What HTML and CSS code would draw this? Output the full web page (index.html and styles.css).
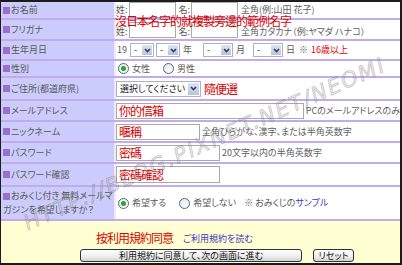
FILE: index.html
```html
<!DOCTYPE html>
<html lang="ja">
<head>
    <meta charset="UTF-8">
    <meta name="viewport" content="width=device-width, initial-scale=1.0">
    <title>会員登録</title>
    <link rel="stylesheet" href="styles.css">
</head>
<body>
    <div class="frame">
        <div class="form">
            <!-- Name -->
            <div class="form-row row-name">
                <div class="label"><span>お名前</span></div>
                <div class="value">
                    <span class="caption">姓:</span><input class="field w-name" type="text">
                    <span class="caption gap-l">名:</span><input class="field w-name" type="text">
                    <span class="hint">全角(例:山田 花子)</span>
                </div>
            </div>

            <div class="form-row row-kana">
                <div class="label"><span>フリガナ</span></div>
                <div class="value bottom">
                    <span class="caption">姓:</span><input class="field w-name" type="text">
                    <span class="caption gap-l">名:</span><input class="field w-name" type="text">
                    <span class="hint">全角カタカナ（例:ヤマダ ハナコ）</span>
                </div>
            </div>

            <!-- Birthday -->
            <div class="form-row row-birth">
                <div class="label"><span>生年月日</span></div>
                <div class="value">
                    <span class="caption year">19</span>
                    <span class="combo w-digit"><span class="combo-text">-</span><span class="combo-btn"><svg width="7" height="5" viewBox="0 0 7 5"><path d="M1 1 L3.5 3.5 L6 1" /></svg></span></span>
                    <span class="combo w-digit next"><span class="combo-text">-</span><span class="combo-btn"><svg width="7" height="5" viewBox="0 0 7 5"><path d="M1 1 L3.5 3.5 L6 1" /></svg></span></span>
                    <span class="caption unit">年</span>
                    <span class="combo w-day month"><span class="combo-text">-</span><span class="combo-btn"><svg width="7" height="5" viewBox="0 0 7 5"><path d="M1 1 L3.5 3.5 L6 1" /></svg></span></span>
                    <span class="caption unit">月</span>
                    <span class="combo w-day day"><span class="combo-text">-</span><span class="combo-btn"><svg width="7" height="5" viewBox="0 0 7 5"><path d="M1 1 L3.5 3.5 L6 1" /></svg></span></span>
                    <span class="caption unit">日</span>
                    <span class="caption unit">※</span>
                    <span class="age">16歳以上</span>
                </div>
            </div>

            <div class="form-row row-sex">
                <div class="label"><span>性別</span></div>
                <div class="value">
                    <span class="radio on"></span><span class="caption opt">女性</span>
                    <span class="radio second"></span><span class="caption opt">男性</span>
                </div>
            </div>

            <div class="form-row row-pref">
                <div class="label"><span>ご住所(都道府県)</span></div>
                <div class="value">
                    <span class="combo w-pref"><span class="combo-text">選択してください</span><span class="combo-btn"><svg width="7" height="5" viewBox="0 0 7 5"><path d="M1 1 L3.5 3.5 L6 1" /></svg></span></span>
                    <span class="note inline">隨便選</span>
                </div>
            </div>

            <div class="form-row row-mail">
                <div class="label"><span>メールアドレス</span></div>
                <div class="value">
                    <input class="field w-mail red-value" type="text" value="你的信箱">
                    <span class="hint">PCのメールアドレスのみ</span>
                </div>
            </div>

            <div class="form-row row-nick">
                <div class="label"><span>ニックネーム</span></div>
                <div class="value">
                    <input class="field w-nick red-value" type="text" value="暱稱">
                    <span class="hint">全角ひらがな、漢字、または半角英数字</span>
                </div>
            </div>

            <div class="form-row row-pass">
                <div class="label"><span>パスワード</span></div>
                <div class="value">
                    <input class="field w-pass red-value" type="text" value="密碼">
                    <span class="hint">20文字以内の半角英数字</span>
                </div>
            </div>

            <div class="form-row row-pass2">
                <div class="label"><span>パスワード確認</span></div>
                <div class="value">
                    <input class="field w-pass tall red-value" type="text" value="密碼確認">
                </div>
            </div>

            <div class="form-row row-omikuji">
                <div class="label"><span>おみくじ付き 無料メールマ<br>ガジンを希望しますか？</span></div>
                <div class="value">
                    <span class="radio on"></span><span class="caption opt">希望する</span>
                    <span class="radio second wide"></span><span class="caption opt">希望しない</span>
                    <span class="caption sample">※ おみくじの<a href="#">サンプル</a></span>
                </div>
            </div>

            <!-- Annotation over the two name rows -->
            <span class="note name-note">沒日本名字的就複製旁邊的範例名字</span>
        </div>

        <div class="footer">
            <div class="agree-line">
                <span class="note">按利用規約同意</span>
                <a class="rules-link" href="#">ご利用規約を読む</a>
            </div>
            <div class="btn-line">
                <button class="btn btn-next" type="button">利用規約に同意して、次の画面に進む</button>
                <button class="btn btn-reset" type="button">リセット</button>
            </div>
        </div>

        <span class="watermark">HTTP://BLOG.PIXNET.NET/NEOMI</span>
    </div>
</body>
</html>
```

FILE: styles.css
```css
* {
    box-sizing: border-box;
}

body {
    margin: 0;
    background: #ffffff;
    font-family: "Noto Sans CJK JP", "Noto Sans", sans-serif;
    font-feature-settings: "palt";
    color: #5a5a5a;
}

/* Outer dark frame of the capture */
.frame {
    position: relative;
    width: 402px;
    height: 265px;
    border: 2px solid #1c1c1c;
    border-left-width: 1px;
    overflow: hidden;
}

.form {
    position: relative;
}

/* One line of the form: label column + value column */
.form-row {
    display: grid;
    grid-template-columns: 113px 1fr;
    border-bottom: 2px solid #c1abea;
}

.row-name { height: 18px; }
.row-kana { height: 21px; }
.row-birth { height: 20px; }
.row-sex { height: 17px; }
.row-pref { height: 23px; }
.row-mail { height: 21px; }
.row-nick { height: 21px; }
.row-pass { height: 21px; }
.row-pass2 { height: 23px; }
.row-omikuji { height: 34px; }

.label {
    display: flex;
    align-items: center;
    padding-left: 2px;
    background: #ccccfc;
    font-size: 9px;
    line-height: 14px;
    color: #585858;
    white-space: nowrap;
}

.label span::before {
    content: "";
    display: inline-block;
    width: 7px;
    height: 7px;
    margin-right: 1px;
    background: #9a6fd2;
    vertical-align: -0.5px;
}

.value {
    display: flex;
    align-items: center;
    padding-left: 0;
    border-left: 2px solid #efecf8;
    background: #ffffff;
    font-size: 9px;
    line-height: 12px;
    white-space: nowrap;
    overflow: hidden;
}

.value.bottom {
    align-items: flex-end;
    padding-bottom: 1px;
}

.caption {
    color: #5a5a5a;
    margin-right: 1px;
}

.gap-l {
    margin-left: 3px;
}

.hint {
    margin-left: 3px;
    color: #606060;
}

/* Text inputs */
.field {
    height: 16px;
    margin: 0;
    padding: 0 2px;
    border: 1px solid #a9a9a9;
    background: #ffffff;
    font-family: "Noto Sans CJK JP", sans-serif;
    font-size: 9px;
    outline: none;
}

.field.tall {
    height: 17px;
}

.w-name { width: 47px; }
.w-mail { width: 192px; }
.w-nick { width: 84px; }
.w-pass { width: 104px; }

.w-mail + .hint,
.w-nick + .hint,
.w-pass + .hint {
    margin-left: 2px;
}

.red-value {
    color: #d60000;
    font-family: "Noto Sans CJK TC", sans-serif;
    font-size: 12px;
    letter-spacing: -1px;
}

/* XP style drop-down */
.combo {
    display: inline-flex;
    height: 14px;
    border: 1px solid #a7b3c8;
    background: #ffffff;
}

.combo-text {
    flex: 1;
    padding-left: 3px;
    font-size: 9px;
    line-height: 12px;
    color: #222222;
}

.combo-btn {
    display: flex;
    align-items: center;
    justify-content: center;
    width: 12px;
    border: 1px solid #ffffff;
    background: linear-gradient(#dde4f2, #b9c3da);
}

.combo-btn svg path {
    fill: none;
    stroke: #2f3f66;
    stroke-width: 1.7;
}

.w-digit { width: 24px; }
.w-day { width: 30px; }

.w-pref {
    width: 85px;
    height: 16px;
}

.w-pref .combo-text {
    line-height: 14px;
}

.w-pref .combo-btn {
    width: 13px;
}

.year {
    margin-left: 1px;
    margin-right: 3px;
}

.combo.next { margin-left: 2px; }
.combo.month { margin-left: 10px; }
.combo.day { margin-left: 7px; }

.unit {
    margin-left: 3px;
}

.age {
    margin-left: 2px;
    color: #e00000;
}

/* Radio buttons */
.radio {
    position: relative;
    width: 11px;
    height: 11px;
    margin-left: 2px;
    margin-right: 3px;
    border: 1px solid #4d6a8c;
    border-radius: 50%;
    background: linear-gradient(135deg, #e6e6e6, #ffffff);
}

.radio.on::after {
    content: "";
    position: absolute;
    left: 2px;
    top: 2px;
    width: 5px;
    height: 5px;
    border-radius: 50%;
    background: #2ea22e;
}

.radio.second { margin-left: 12px; }
.radio.wide { margin-left: 12px; }

.sample {
    margin-left: 7px;
}

.sample a,
.rules-link {
    color: #3a3ac8;
    text-decoration: none;
}

/* Red annotations */
.note {
    color: #d80000;
    font-family: "Noto Sans CJK TC", sans-serif;
    font-size: 12px;
    line-height: 14px;
    letter-spacing: -1px;
}

.note.inline {
    margin-left: 3px;
}

.name-note {
    position: absolute;
    left: 114px;
    top: 13px;
    line-height: 12px;
}

/* Bottom area with buttons */
.footer {
    height: 42px;
    padding-top: 10px;
    background: #ffffd2;
}

.agree-line {
    display: flex;
    align-items: center;
    height: 14px;
    padding-left: 95px;
}

.rules-link {
    margin-left: 10px;
    font-size: 9px;
}

.btn-line {
    display: flex;
    gap: 11px;
    margin-top: 4px;
    padding-left: 79px;
}

.btn {
    height: 13px;
    padding: 0;
    border: 1px solid #283246;
    border-radius: 3px;
    background: linear-gradient(#ffffff, #efefef 55%, #d2d2d2);
    font-family: "Noto Sans CJK JP", sans-serif;
    font-feature-settings: "palt";
    font-size: 9px;
    line-height: 11px;
    color: #111111;
}

.btn-next { width: 222px; }
.btn-reset { width: 41px; }

/* Blog watermark across the capture */
.watermark {
    position: absolute;
    left: 24px;
    top: 212px;
    font: italic 21px/20px "DejaVu Sans", sans-serif;
    letter-spacing: 2px;
    color: rgba(180, 180, 180, 0.3);
    -webkit-text-stroke: 0.6px rgba(80, 80, 80, 0.38);
    transform: rotate(-24deg);
    transform-origin: 0 50%;
    white-space: nowrap;
    pointer-events: none;
}
```
